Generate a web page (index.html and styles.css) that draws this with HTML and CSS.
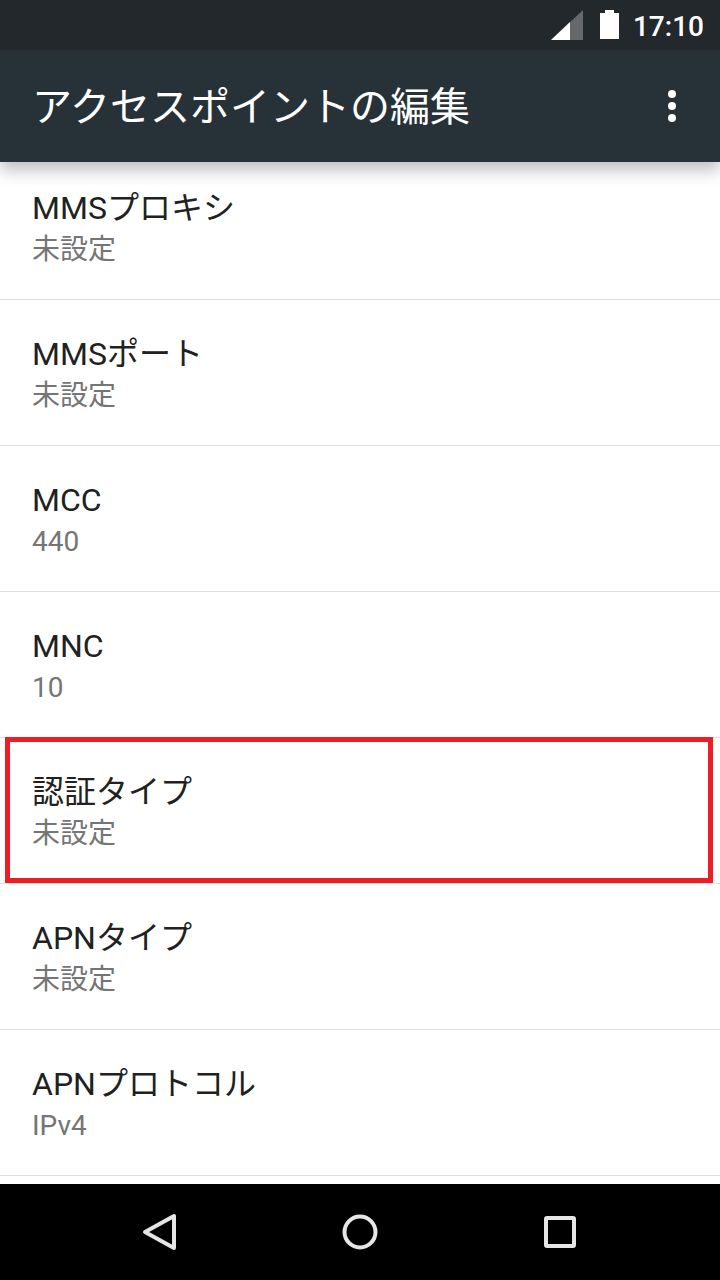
FILE: index.html
```
<!DOCTYPE html>
<html lang="ja">
<head>
  <meta charset="UTF-8" />
  <meta name="viewport" content="width=device-width, initial-scale=1.0"/>
  <title>アクセスポイントの編集</title>
  <link rel="stylesheet" href="styles.css">
</head>
<body>

  <div class="status-bar">
    <svg class="signal" width="32" height="30" viewBox="0 0 32 30">
      <path d="M32 0V30H0Z" fill="#65696b"/>
      <path d="M19 12V30H0Z" fill="#fff"/>
    </svg>
    <svg class="battery" width="19" height="30" viewBox="0 0 19 30">
      <path d="M5 0H14V3H19V29H0V3H5Z" fill="#fff"/>
    </svg>
    <span class="clock">17:10</span>
  </div>

  <header class="app-bar">
    <h1>アクセスポイントの編集</h1>
    <button class="more" aria-label="その他">
      <svg width="8" height="32" viewBox="0 0 8 32" fill="#fff">
        <circle cx="4" cy="4" r="4"/>
        <circle cx="4" cy="16" r="4"/>
        <circle cx="4" cy="28" r="4"/>
      </svg>
    </button>
  </header>

  <main class="settings">
    <ul class="list">
      <li><button class="row"><span class="name">MMSプロキシ</span><span class="value">未設定</span></button></li>
      <li><button class="row"><span class="name">MMSポート</span><span class="value">未設定</span></button></li>
      <li><button class="row"><span class="name">MCC</span><span class="value">440</span></button></li>
      <li><button class="row"><span class="name">MNC</span><span class="value">10</span></button></li>
      <li class="marked"><button class="row"><span class="name">認証タイプ</span><span class="value">未設定</span></button></li>
      <li><button class="row"><span class="name">APNタイプ</span><span class="value">未設定</span></button></li>
      <li><button class="row"><span class="name">APNプロトコル</span><span class="value">IPv4</span></button></li>
    </ul>
  </main>

  <nav class="nav-bar">
    <button aria-label="戻る">
      <svg width="40" height="40" viewBox="0 0 40 40">
        <path d="M34 4V36L5 20Z"/>
      </svg>
    </button>
    <button aria-label="ホーム">
      <svg width="40" height="40" viewBox="0 0 40 40">
        <circle cx="20" cy="20" r="15.5"/>
      </svg>
    </button>
    <button aria-label="最近使ったアプリ">
      <svg width="40" height="40" viewBox="0 0 40 40">
        <rect x="6" y="6" width="28" height="28" rx="1"/>
      </svg>
    </button>
  </nav>

</body>
</html>
```
FILE: styles.css
```
* {
  box-sizing: border-box;
}
body {
  display: flex;
  flex-direction: column;
  height: 100vh;
  margin: 0;
  background-color: #fff;
  color: #212121;
  font-family: Roboto, "Noto Sans CJK JP", sans-serif;
}
button {
  padding: 0;
  border: 0;
  background: none;
  color: inherit;
  font: inherit;
  cursor: pointer;
}
svg {
  display: block;
}

.status-bar {
  display: flex;
  flex: none;
  align-items: center;
  justify-content: flex-end;
  height: 50px;
  padding: 0 16px;
  background-color: #22282b;
  color: #fff;
}
.battery {
  margin: 0 14px 0 17px;
}
.clock {
  padding-top: 3px;
  font-size: 28px;
  font-weight: 500;
  line-height: 32px;
}

.app-bar {
  display: flex;
  flex: none;
  align-items: center;
  justify-content: space-between;
  height: 112px;
  padding: 0 16px 0 32px;
  background-color: #273238;
  color: #fff;
  box-shadow: 0 8px 16px rgba(0, 0, 0, 0.26);
  clip-path: inset(0 0 -24px);
  z-index: 1;
}
.app-bar h1 {
  margin: 0;
  padding-top: 4px;
  font-size: 40px;
  font-weight: 400;
  line-height: 56px;
}
.more {
  display: flex;
  align-items: center;
  justify-content: center;
  width: 64px;
  height: 64px;
}

.settings {
  flex: 1;
  min-height: 0;
  overflow: hidden;
}
/* first row sits partly scrolled under the app bar */
.list {
  margin: -8px 0 0;
  padding: 0;
  list-style: none;
}
.list li {
  position: relative;
  border-bottom: 1px solid #dedede;
}
.row {
  display: flex;
  flex-direction: column;
  justify-content: center;
  width: 100%;
  height: 145px;
  padding: 4px 32px 0;
  text-align: left;
}
.name {
  font-size: 32px;
  line-height: 42px;
}
.value {
  color: #757575;
  font-size: 28px;
  line-height: 42px;
}
.marked::after {
  content: "";
  position: absolute;
  top: -1px;
  right: 7px;
  bottom: 0;
  left: 5px;
  border: 5px solid #ee1c24;
  pointer-events: none;
}

.nav-bar {
  display: flex;
  flex: none;
  justify-content: center;
  height: 96px;
  background-color: #000;
}
.nav-bar button {
  display: flex;
  align-items: center;
  justify-content: center;
  width: 200px;
}
.nav-bar svg {
  fill: none;
  stroke: #e6e6e6;
  stroke-width: 4;
  stroke-linejoin: round;
}
```
